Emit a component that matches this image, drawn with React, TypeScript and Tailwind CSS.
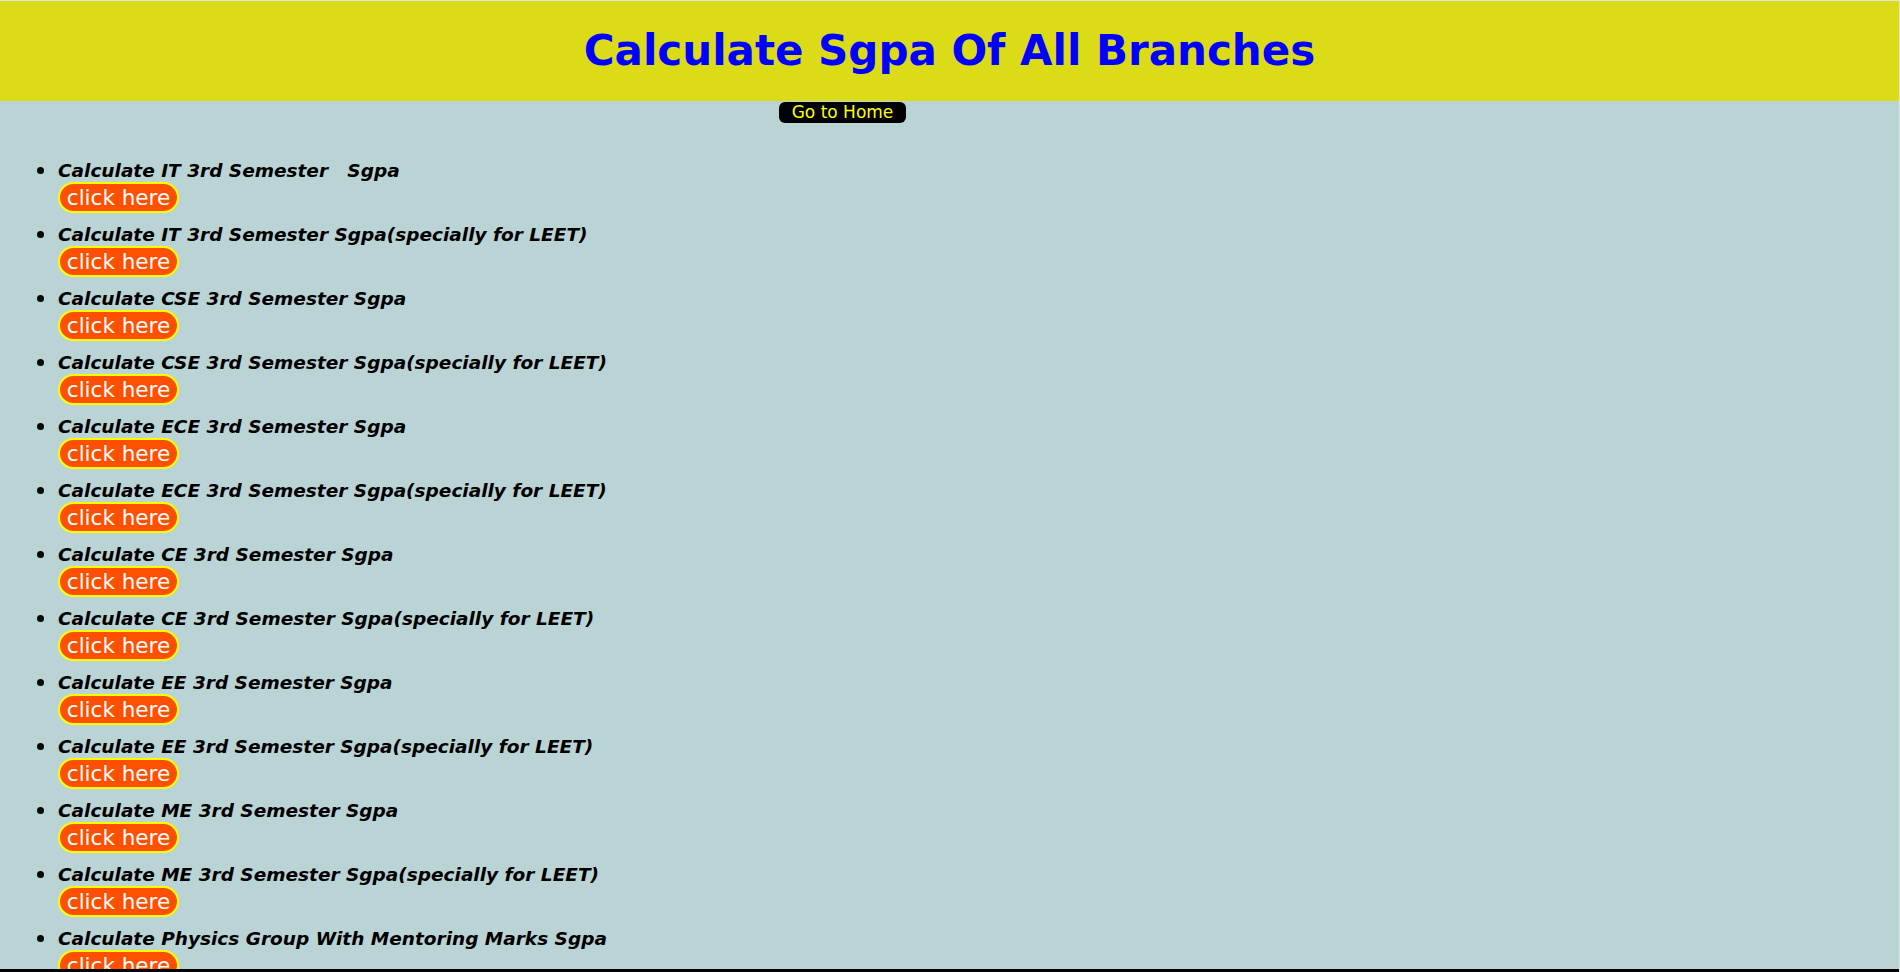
import React from "react";

const items = [
  "Calculate IT 3rd Semester \u00a0 Sgpa",
  "Calculate IT 3rd Semester Sgpa(specially for LEET)",
  "Calculate CSE 3rd Semester Sgpa",
  "Calculate CSE 3rd Semester Sgpa(specially for LEET)",
  "Calculate ECE 3rd Semester Sgpa",
  "Calculate ECE 3rd Semester Sgpa(specially for LEET)",
  "Calculate CE 3rd Semester Sgpa",
  "Calculate CE 3rd Semester Sgpa(specially for LEET)",
  "Calculate EE 3rd Semester Sgpa",
  "Calculate EE 3rd Semester Sgpa(specially for LEET)",
  "Calculate ME 3rd Semester Sgpa",
  "Calculate ME 3rd Semester Sgpa(specially for LEET)",
  "Calculate Physics Group With Mentoring Marks Sgpa",
  "Calculate Chemistry Group With Mentoring Marks Sgpa",
];

export default function App() {
  return (
    <div
      className="flex h-[972px] flex-col overflow-hidden border-t border-r border-[#e2e2e2] bg-[#bad3d5] text-black"
      style={{ fontFamily: '"DejaVu Sans", "Open Sans", sans-serif' }}
    >
      <header className="flex h-[100px] shrink-0 items-center justify-center bg-[#dbdb18]">
        <h1 className="pb-[2px] text-[42px] font-bold text-[#0000ff]">Calculate Sgpa Of All Branches</h1>
      </header>
      <div className="min-h-0 flex-1 overflow-hidden">
        <div className="pl-[779px]">
          <button className="h-[21px] w-[127px] rounded-[6px] bg-black text-[17px] leading-[21px] text-[#ffff00]">
            Go to Home
          </button>
        </div>
        <ul className="mt-[33px] list-disc pl-[58px] marker:text-[24px]">
          {items.map((t) => (
            <li key={t} className="mb-[9px] text-[18.5px] leading-[23px] font-bold italic">
              <div className="flex flex-col items-start">
                <span>{t}</span>
                <button className="flex h-[31px] w-[121px] items-center justify-center rounded-full border-2 border-[#ffff00] bg-[#ff5000] text-[21.5px] leading-[26px] font-normal not-italic text-white">
                  click here
                </button>
              </div>
            </li>
          ))}
        </ul>
      </div>
      <div className="h-[3px] shrink-0 bg-black" />
    </div>
  );
}
